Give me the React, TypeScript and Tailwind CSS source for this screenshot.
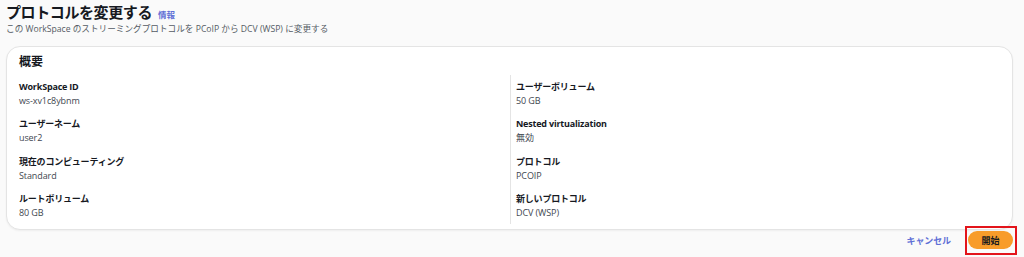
import React from 'react';

const font = { fontFamily: '"Open Sans", "Noto Sans CJK JP", sans-serif' };

type Item = { label: string; value: string };

const left: Item[] = [
  { label: 'WorkSpace ID', value: 'ws-xv1c8ybnm' },
  { label: 'ユーザーネーム', value: 'user2' },
  { label: '現在のコンピューティング', value: 'Standard' },
  { label: 'ルートボリューム', value: '80 GB' },
];

const right: Item[] = [
  { label: 'ユーザーボリューム', value: '50 GB' },
  { label: 'Nested virtualization', value: '無効' },
  { label: 'プロトコル', value: 'PCOIP' },
  { label: '新しいプロトコル', value: 'DCV (WSP)' },
];

function Field({ item }: { item: Item }) {
  return (
    <div className="h-[27px]">
      <div className="text-[9px] font-bold leading-[14px] tracking-[-0.2px] text-[#16191f]">
        {item.label}
      </div>
      <div className="text-[9px] leading-[13px] tracking-[-0.1px] text-[#414750]">{item.value}</div>
    </div>
  );
}

export default function App() {
  return (
    <div className="h-[257px] overflow-hidden bg-[#fafafa] px-[6px] pt-[2px]" style={font}>
      <div className="flex h-[20px] items-baseline gap-[6px]">
        <h1 className="text-[15px] font-bold leading-[20px] tracking-[-0.4px] text-[#16191f]">
          プロトコルを変更する
        </h1>
        <span className="text-[8.5px] font-bold text-[#5f6fd6]">情報</span>
      </div>
      <p className="mt-[1px] text-[8.65px] leading-[13px] text-[#545b64]">
        この WorkSpace のストリーミングプロトコルを PCoIP から DCV (WSP) に変更する
      </p>

      <div className="mt-[10px] mr-[5px] rounded-[14px] border border-[#e4e4e4] bg-white pl-[12px] pt-[6px] pb-[5px] shadow-[0_1px_2px_rgba(0,0,0,0.05)]">
        <h2 className="text-[12px] font-bold leading-[18px] text-[#16191f]">概要</h2>
        <div className="mt-[4px] grid grid-cols-[491px_1fr]">
          <div className="flex flex-col gap-[10.33px] py-[5px]">
            {left.map((it) => (
              <Field key={it.label} item={it} />
            ))}
          </div>
          <div className="flex flex-col gap-[10.33px] border-l border-[#e4e4e4] py-[5px] pl-[5px]">
            {right.map((it) => (
              <Field key={it.label} item={it} />
            ))}
          </div>
        </div>
      </div>

      <div className="mt-[-4px] mr-[1px] flex items-center justify-end">
        <button className="mr-[14px] text-[9px] font-bold tracking-[-0.1px] text-[#5f6fd6]">キャンセル</button>
        <div className="border-2 border-[#e3141b] py-[3.5px] pl-[1px] pr-[2px]">
          <button className="block h-[18px] w-[45px] rounded-full bg-[#f89c2a] text-[9px] font-bold text-[#16191f]">
            開始
          </button>
        </div>
      </div>
    </div>
  );
}
